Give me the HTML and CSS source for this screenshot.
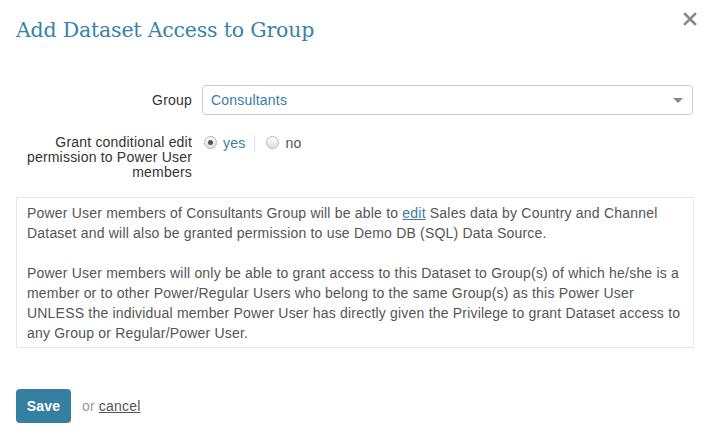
FILE: index.html
```html
<!DOCTYPE html>
<html>
<head>
<meta charset="utf-8">
<link rel="stylesheet" href="styles.css">
</head>
<body>
<div class="modal">
  <div class="header">
    <h1 class="title">Add Dataset Access to Group</h1>
    <svg class="close" width="14" height="14" viewBox="0 0 14 14"><path d="M2 2 L12 12 M12 2 L2 12" stroke="#888" stroke-width="2.6" stroke-linecap="square"/></svg>
  </div>
  <div class="form">
    <div class="row row-group">
      <label class="label">Group</label>
      <div class="select">
        <span class="select-value">Consultants</span>
        <span class="caret"></span>
      </div>
    </div>
    <div class="row row-radio">
      <label class="label">Grant conditional edit permission to Power User members</label>
      <div class="radios">
        <span class="radio checked"></span><span class="radio-text yes">yes</span>
        <span class="sep"></span>
        <span class="radio"></span><span class="radio-text">no</span>
      </div>
    </div>
  </div>
  <div class="info">
    <p>Power User members of Consultants Group will be able to <a class="edit">edit</a> Sales data by Country and Channel Dataset and will also be granted permission to use Demo DB (SQL) Data Source.</p>
    <p>Power User members will only be able to grant access to this Dataset to Group(s) of which he/she is a member or to other Power/Regular Users who belong to the same Group(s) as this Power User UNLESS the individual member Power User has directly given the Privilege to grant Dataset access to any Group or Regular/Power User.</p>
  </div>
  <div class="footer">
    <button class="save">Save</button>
    <span class="or">or</span>
    <a class="cancel">cancel</a>
  </div>
</div>
</body>
</html>
```
FILE: styles.css
```css
* { box-sizing: border-box; }
html, body { margin: 0; padding: 0; background: #fff; }
body {
  font-family: "Liberation Sans", Arial, sans-serif;
  font-size: 14px;
  color: #555;
  letter-spacing: 0.2px;
}
.modal {
  width: 711px;
  padding: 0 17px 0 16px;
}
.header {
  display: flex;
  justify-content: space-between;
  align-items: flex-start;
  height: 85px;
}
.title {
  margin: 16px 0 0 0;
  font-family: "DejaVu Serif", "Liberation Serif", serif;
  font-weight: normal;
  font-size: 20.5px;
  line-height: 28px;
  color: #3783a8;
  letter-spacing: -0.2px;
}
.close {
  margin-top: 12px;
  margin-right: -3px;
}
.form { display: flex; flex-direction: column; }
.row { display: flex; align-items: flex-start; }
.label {
  width: 186px;
  flex: none;
  text-align: right;
  color: #333;
  line-height: 15px;
  padding-right: 10px;
}
.row-group { align-items: center; height: 30px; }
.select {
  flex: 1;
  height: 30px;
  border: 1px solid #ccc;
  border-radius: 4px;
  display: flex;
  align-items: center;
  justify-content: space-between;
  padding: 0 8px 0 8px;
  margin-right: 1px;
}
.select-value { color: #3a7ca5; }
.caret {
  width: 0; height: 0;
  border-left: 5px solid transparent;
  border-right: 5px solid transparent;
  border-top: 5px solid #888;
  margin-right: 1px;
}
.row-radio { margin-top: 20px; }
.radios { display: flex; align-items: center; height: 15px; }
.radio {
  width: 13px; height: 13px;
  border-radius: 50%;
  border: 1px solid #b5b5b5;
  background: linear-gradient(#fdfdfd, #dedede);
  margin-left: 2px;
  position: relative;
  flex: none;
}
.radio.checked::after {
  content: "";
  position: absolute;
  left: 3px; top: 3px;
  width: 5px; height: 5px;
  border-radius: 50%;
  background: #555;
}
.radio-text { margin-left: 6px; }
.radio-text.yes { color: #3a7ca5; }
.sep {
  width: 1px; height: 16px;
  background: #e2e2e2;
  margin: 0 9px 0 9px;
}
.info {
  margin-top: 17px;
  border: 1px solid #e8e8e8;
  padding: 5px 10px 4px 10px;
  line-height: 20px;
  color: #555;
}
.info p { margin: 0; }
.info p + p { margin-top: 20px; }
.edit { color: #3a7ca5; text-decoration: underline; }
.footer {
  margin-top: 41px;
  display: flex;
  align-items: center;
}
.save {
  width: 55px;
  height: 34px;
  background: #357fa0;
  color: #fff;
  border: none;
  border-radius: 4px;
  font-family: "Liberation Sans", Arial, sans-serif;
  font-weight: bold;
  font-size: 14px;
  padding: 0;
  letter-spacing: 0.2px;
}
.or { color: #999; margin-left: 11px; }
.cancel { color: #555; text-decoration: underline; margin-left: 4px; }
```
